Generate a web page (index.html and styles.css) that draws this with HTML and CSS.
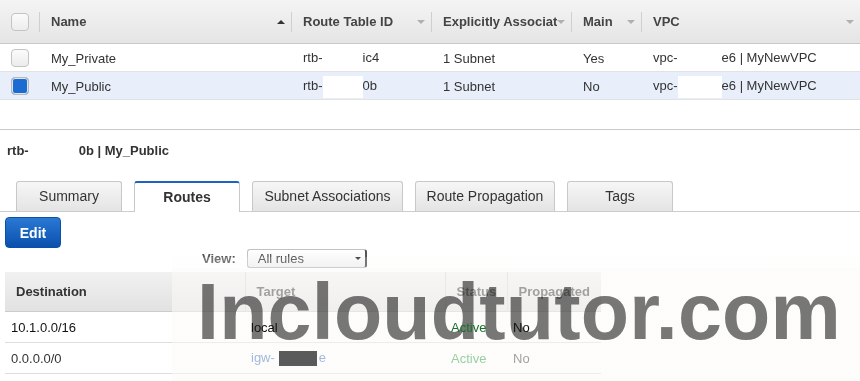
FILE: index.html
```html
<!DOCTYPE html>
<html lang="en">
<head>
	<meta charset="utf-8" />
	<title>Route Tables</title>
	<link rel="stylesheet" href="styles.css">
</head>
<body>
	<table class="grid">
		<colgroup>
			<col style="width:40px">
			<col style="width:252px">
			<col style="width:140px">
			<col style="width:140px">
			<col style="width:70px">
			<col style="width:218px">
		</colgroup>
		<thead>
			<tr>
				<th><div class="hd"><span class="check"></span></div></th>
				<th><div class="hd"><span class="label">Name</span><span class="sort up"></span></div></th>
				<th><div class="hd"><span class="label">Route Table ID</span><span class="sort"></span></div></th>
				<th><div class="hd"><span class="label">Explicitly Associated</span><span class="sort"></span></div></th>
				<th><div class="hd"><span class="label">Main</span><span class="sort"></span></div></th>
				<th><div class="hd last"><span class="label">VPC</span><span class="sort"></span></div></th>
			</tr>
		</thead>
		<tbody>
			<tr>
				<td class="cb"><span class="check"></span></td>
				<td>My_Private</td>
				<td>rtb-<span class="redact w40"></span>ic4</td>
				<td>1 Subnet</td>
				<td>Yes</td>
				<td>vpc-<span class="redact w44"></span>e6 | MyNewVPC</td>
			</tr>
			<tr class="sel">
				<td class="cb"><span class="check on"></span></td>
				<td>My_Public</td>
				<td>rtb-<span class="redact w40"></span>0b</td>
				<td>1 Subnet</td>
				<td>No</td>
				<td>vpc-<span class="redact w44"></span>e6 | MyNewVPC</td>
			</tr>
		</tbody>
	</table>

	<div class="details">
		<h2 class="title">rtb-<span class="redact w50"></span>0b | My_Public</h2>

		<div class="tabs">
			<div class="tab t-summary">Summary</div>
			<div class="tab t-routes active">Routes</div>
			<div class="tab t-subnet">Subnet Associations</div>
			<div class="tab t-prop">Route Propagation</div>
			<div class="tab t-tags">Tags</div>
		</div>

		<button class="btn-edit">Edit</button>

		<div class="view">
			<span class="view-label">View:</span>
			<div class="select"><span>All rules</span><span class="caret"></span></div>
		</div>

		<table class="routes">
			<colgroup>
				<col style="width:240px">
				<col style="width:200px">
				<col style="width:62px">
				<col style="width:94px">
			</colgroup>
			<thead>
				<tr>
					<th>Destination</th>
					<th>Target</th>
					<th>Status</th>
					<th>Propagated</th>
				</tr>
			</thead>
			<tbody>
				<tr class="ontop">
					<td><span>10.1.0.0/16</span></td>
					<td><span>local</span></td>
					<td class="active"><span>Active</span></td>
					<td><span>No</span></td>
				</tr>
				<tr>
					<td>0.0.0.0/0</td>
					<td><a class="link">igw-<span class="mask"></span>e</a></td>
					<td class="active">Active</td>
					<td>No</td>
				</tr>
			</tbody>
		</table>
	</div>

	<div class="watermark"><span>Incloudtutor.com</span></div>
</body>
</html>
```

FILE: styles.css
```css
body {
	margin: 0;
	width: 860px;
	height: 381px;
	overflow: hidden;
	position: relative;
	background-color: #ffffff;
	color: #333333;
	font-family: "Liberation Sans", Arial, Helvetica, sans-serif;
	font-size: 13px;
}

/* top grid */
.grid {
	width: 860px;
	border-collapse: collapse;
	table-layout: fixed;
}
.grid th {
	height: 43px;
	padding: 0;
	background: linear-gradient(#f4f4f4, #e5e5e5);
	border-bottom: 1px solid #c9c9c9;
	text-align: left;
	font-weight: bold;
	color: #444444;
}
.grid .hd {
	display: flex;
	align-items: center;
	height: 20px;
	padding: 0 6px 0 11px;
	border-right: 1px solid #cfcfcf;
	box-shadow: 1px 0 0 #fbfbfb;
}
.grid .hd.last {
	border-right: none;
	box-shadow: none;
}
.grid .label {
	flex: 1;
	min-width: 0;
	overflow: hidden;
	white-space: nowrap;
}
.sort {
	width: 0;
	height: 0;
	border-left: 4px solid transparent;
	border-right: 4px solid transparent;
	border-top: 4px solid #b0b0b0;
}
.sort.up {
	border-top: none;
	border-bottom: 4px solid #333333;
}
.grid td {
	height: 25px;
	padding: 2px 0 0 11px;
	border-bottom: 1px solid #e2e2e2;
	white-space: nowrap;
	overflow: hidden;
	color: #333333;
}
.grid td.cb {
	height: 27px;
	padding-top: 0;
}
.grid tr.sel td {
	background-color: #e8effa;
}
.check {
	display: block;
	width: 18px;
	height: 18px;
	box-sizing: border-box;
	border: 1px solid #c4c4c4;
	border-radius: 4px;
	background: linear-gradient(#fbfbfb, #ececec);
}
.check.on {
	background: #1b6bd0;
	border-color: #b8b8b8;
	box-shadow: inset 0 0 0 1px #dbe6f5;
}
.redact {
	display: inline-block;
	height: 22px;
	vertical-align: middle;
	background-color: #ffffff;
}
.w40 { width: 40px; }
.w44 { width: 44px; }
.w50 { width: 50px; height: 18px; }

/* details */
.details {
	margin-top: 29px;
	border-top: 1px solid #cacaca;
}
.title {
	margin: 13px 0 0 7px;
	font-size: 13px;
	line-height: 16px;
	font-weight: bold;
	color: #333333;
}
.tabs {
	display: flex;
	align-items: flex-end;
	gap: 12px;
	margin-top: 20px;
	padding-left: 16px;
	border-bottom: 1px solid #cccccc;
}
.tab {
	height: 30px;
	box-sizing: border-box;
	border: 1px solid #c8c8c8;
	border-bottom: none;
	border-radius: 3px 3px 0 0;
	background: linear-gradient(#f6f6f6, #e4e4e4);
	font-size: 14px;
	line-height: 29px;
	text-align: center;
	color: #333333;
}
.tab.active {
	height: 31px;
	margin-bottom: -1px;
	background: #ffffff;
	border-top: 2px solid #1f63c2;
	font-weight: bold;
	line-height: 28px;
}
.t-summary { width: 106px; }
.t-routes { width: 106px; }
.t-subnet { width: 151px; }
.t-prop { width: 140px; }
.t-tags { width: 106px; }

.btn-edit {
	display: block;
	margin: 5px 0 0 5px;
	width: 56px;
	height: 31px;
	padding: 0;
	border: 1px solid #0b4fa6;
	border-radius: 4px;
	background: linear-gradient(#2a79d4, #0a50ad);
	color: #ffffff;
	font-family: "Liberation Sans", Arial, sans-serif;
	font-size: 14px;
	font-weight: bold;
}

.view {
	display: flex;
	align-items: center;
	gap: 11px;
	margin-top: 1px;
	padding-left: 202px;
	height: 19px;
}
.view-label {
	font-weight: bold;
	color: #555555;
}
.select {
	display: flex;
	align-items: center;
	justify-content: space-between;
	width: 120px;
	height: 19px;
	box-sizing: border-box;
	padding-left: 10px;
	border: 1px solid #c2c2c2;
	border-right: 2px solid #555555;
	border-radius: 3px;
	background: linear-gradient(#ffffff, #f0f0f0);
	color: #444444;
}
.caret {
	width: 0;
	height: 0;
	margin-right: 4px;
	border-left: 3px solid transparent;
	border-right: 3px solid transparent;
	border-top: 3px solid #222222;
}

/* routes table */
.routes {
	margin: 4px 0 0 5px;
	width: 596px;
	border-collapse: collapse;
	table-layout: fixed;
}
.routes th {
	height: 39px;
	padding: 0 0 0 11px;
	background: linear-gradient(#f1f1f1, #e2e2e2);
	border-bottom: 1px solid #cccccc;
	text-align: left;
	font-weight: bold;
	color: #333333;
}
.routes th + th {
	border-left: 1px solid #d2d2d2;
}
.routes td {
	height: 30px;
	padding: 0 0 0 6px;
	border-bottom: 1px solid #dddddd;
	white-space: nowrap;
	color: #333333;
}
.routes td.active {
	color: #1f9a3a;
}
.routes tr.ontop span {
	position: relative;
	z-index: 1;
}
.routes tr.ontop td.active {
	color: #17722c;
}
.routes tr.ontop td {
	color: #111111;
}
.link {
	color: #2d69c4;
}
.mask {
	display: inline-block;
	position: relative;
	z-index: 1;
	width: 38px;
	height: 15px;
	margin: 0 2px 0 4px;
	vertical-align: middle;
	background-color: #5a5a5a;
}

/* watermark over the bottom right */
.watermark {
	position: absolute;
	left: 172px;
	top: 257px;
	width: 688px;
	height: 124px;
	background: linear-gradient(rgba(251, 250, 247, 0.2) 0 11px, rgba(251, 250, 247, 0.55) 11px);
}
.watermark span {
	display: block;
	padding: 15px 0 0 25px;
	font-family: "Liberation Sans", Arial, sans-serif;
	font-size: 79px;
	line-height: 80px;
	font-weight: bold;
	letter-spacing: 0.2px;
	color: #787878;
	mix-blend-mode: multiply;
	white-space: nowrap;
}
```
